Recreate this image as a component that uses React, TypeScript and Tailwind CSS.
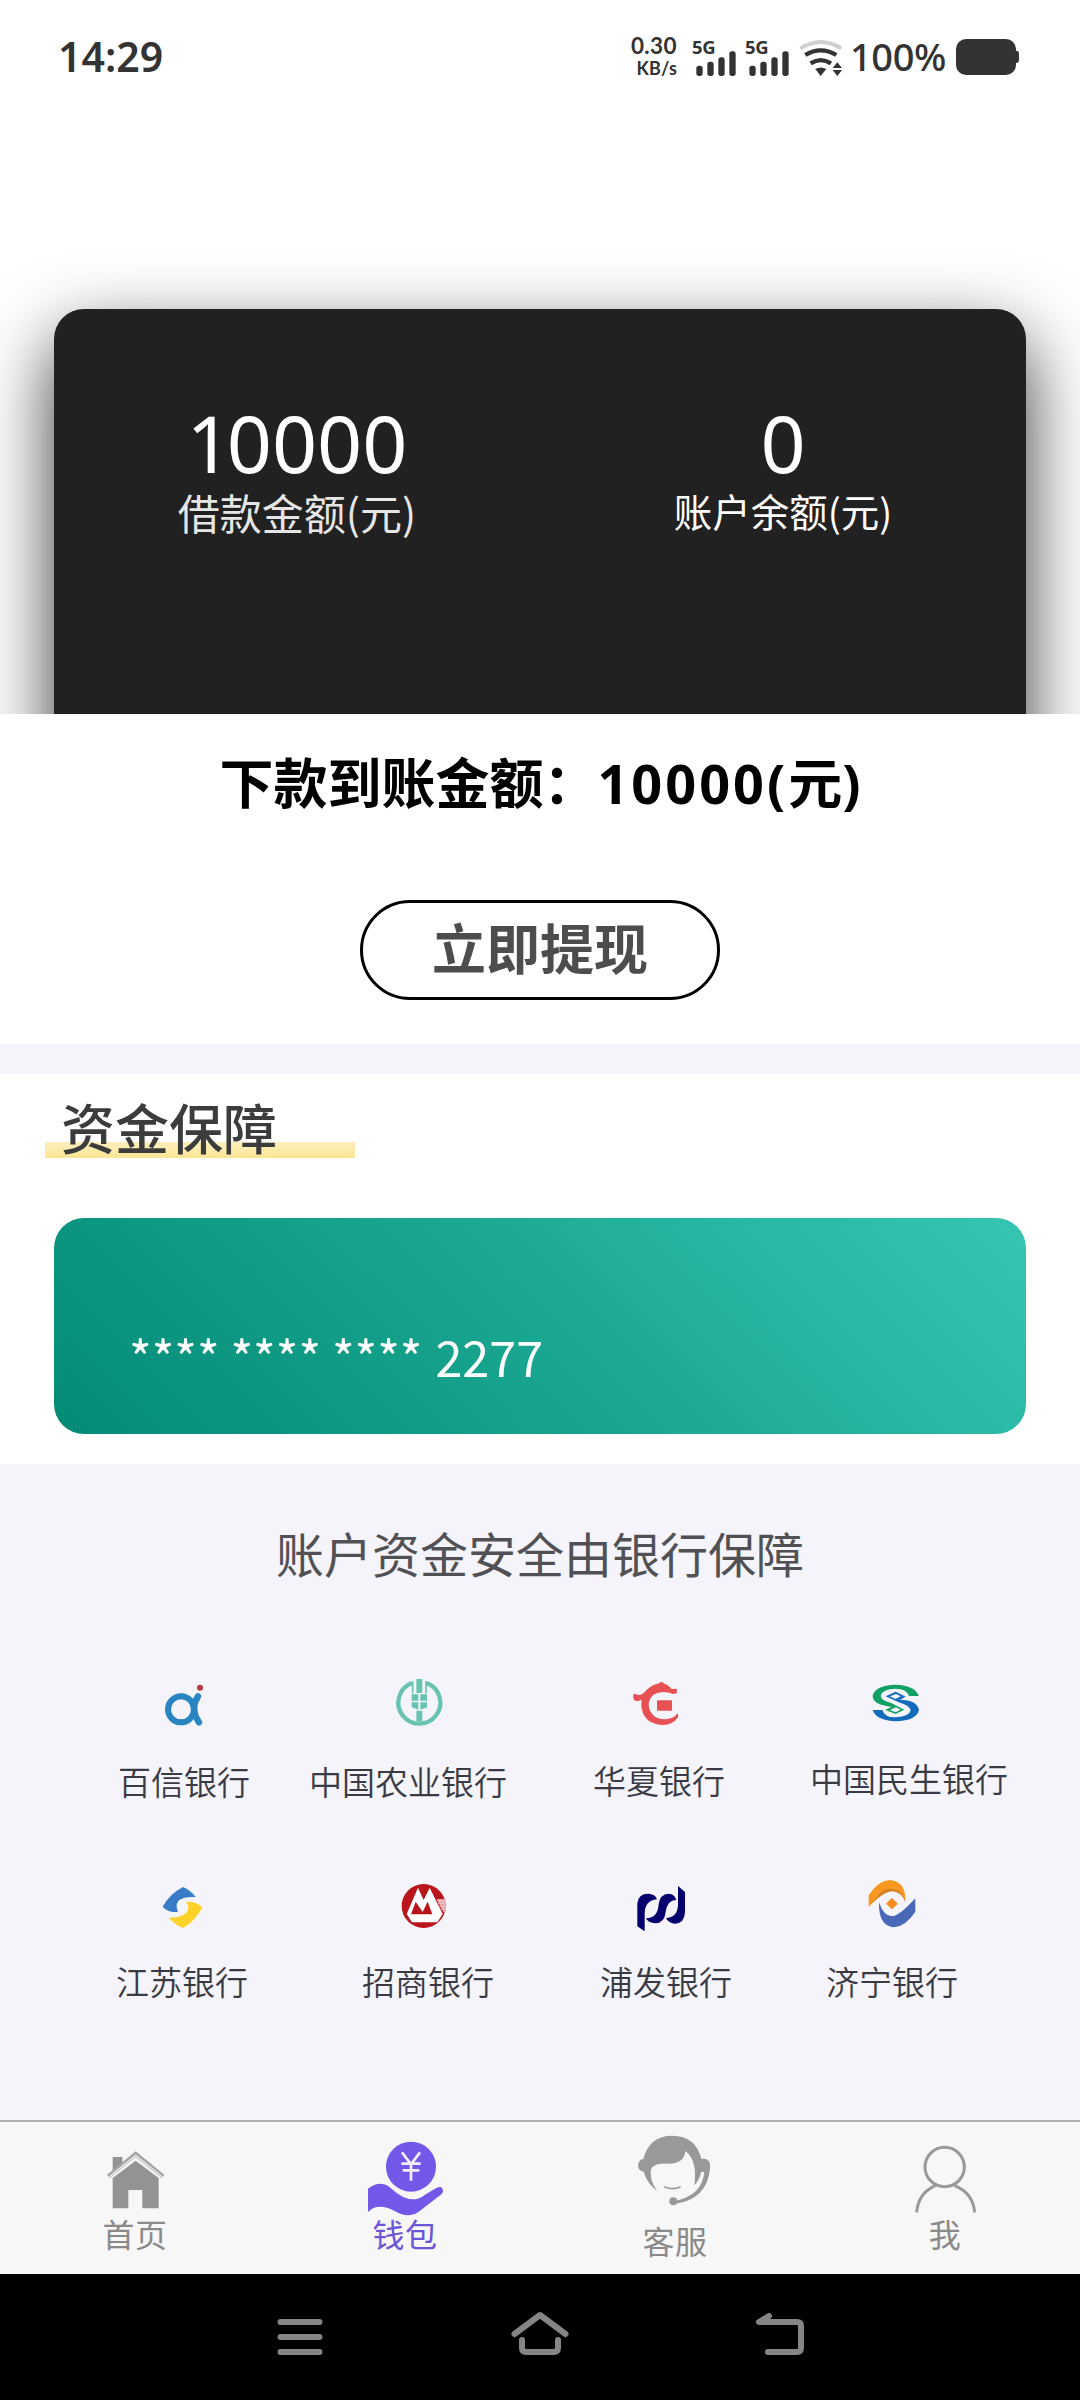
import type { ReactNode } from "react";

const cjk = "font-['Noto_Sans_CJK_SC',sans-serif]";
const latin = "font-['Noto_Sans','Noto_Sans_CJK_SC',sans-serif]";

function Signal() {
  return (
    <div className="relative h-[50px] w-[43px]">
      <span className="absolute -left-[2px] -top-px text-[18.5px] font-bold leading-[24px] tracking-[-0.3px]">5G</span>
      <svg className="absolute left-0 top-0" width="43" height="50" viewBox="278 48 129 150" fill="#333">
        <rect x="285" y="137" width="19" height="31" rx="8" />
        <rect x="318" y="125" width="19" height="43" rx="8" />
        <rect x="351" y="112" width="19" height="56" rx="8" />
        <rect x="384" y="94" width="19" height="74" rx="8" />
      </svg>
    </div>
  );
}

function StatusBar() {
  return (
    <header className={`flex h-[116px] items-start justify-between pl-[58px] pr-[60px] text-[#333] ${latin}`}>
      <span className="mt-[27px] text-[41px] font-semibold leading-[58px]">14:29</span>
      <div className="flex items-start">
        <div className="mr-[2px] mt-[33px] flex w-[48px] flex-col items-end font-['Lato',sans-serif] font-bold">
          <span className="text-[22.5px] leading-[25px] tracking-[0.4px]">0.30</span>
          <span className="text-[18px] leading-[20px] tracking-[0.2px]">KB/s</span>
        </div>
        <div className="ml-[15px] mt-[36px] flex gap-[10px]">
          <Signal />
          <Signal />
        </div>
        <svg className="ml-[7px] mt-[36px]" width="48" height="44" viewBox="590 48 144 132" fill="none">
          <path d="M600 85Q662 47 723 85" stroke="#d0d0d0" strokeWidth="12" />
          <path d="M615 105Q661 77 708 105M631 130Q661 111 692 130" stroke="#333" strokeWidth="13" />
          <path d="M645 147Q661 138 678 147L661 168Z" fill="#333" />
          <path d="M711 127l14 17h-28zM711 168l14-18h-28z" fill="#333" />
        </svg>
        <span className="ml-[5px] mt-[29px] w-[97px] text-[38px] font-medium leading-[54px] tracking-[-0.4px]">100%</span>
        <svg className="ml-[9px] mt-[39px]" width="64" height="37" viewBox="1071 57 192 111" fill="#333">
          <rect x="1071" y="57" width="180" height="108" rx="30" />
          <rect x="1238" y="92" width="22" height="37" rx="9" />
        </svg>
      </div>
    </header>
  );
}

type Bank = { name: string; cell: string; label?: string; viewBox: string; width: number; logo: ReactNode };

const firstRow: Bank[] = [
  {
    name: "百信银行", cell: "w-[132px]", viewBox: "114 0 396 270", width: 132,
    logo: (
      <>
        <circle cx="303" cy="178" r="39" fill="none" stroke="#2885c2" strokeWidth="18" />
        <path d="M354 139Q329 178 357 217" fill="none" stroke="#2885c2" strokeWidth="19" strokeLinecap="round" />
        <circle cx="360" cy="113" r="9" fill="#b53740" />
      </>
    ),
  },
  {
    name: "中国农业银行", cell: "ml-[59px] w-[198px]", viewBox: "687 0 594 270", width: 198,
    logo: (
      <>
        <g fill="none" stroke="#69c3b2">
          <path d="M996 99A63 63 0 1 0 1040 99" strokeWidth="13" />
          <path d="M998 94V130M1038 94V130" strokeWidth="5" />
        </g>
        <g fill="#69c3b2">
          <path d="M1009 87h18v42h-18zM995 133h20v19h-20zM1021 133h20v19h-20zM995 157h20v22l-20-7zM1021 157h20v15l-20 7zM1009 182h18v32h-18z" />
        </g>
      </>
    ),
  },
  {
    name: "华夏银行", cell: "ml-[86px] w-[132px]", label: "mt-[16px]", viewBox: "99 0 396 270", width: 132,
    logo: (
      <g fill="#e85154">
        <path d="M219 137Q222 128 231 134Q244 138 257 123Q275 103 294 101L305 95L313 101Q327 105 334 117L350 116L351 129L340 132Q305 119 280 134Q260 153 269 180Q282 209 315 208Q341 207 353 190Q356 193 354 202Q338 225 309 225Q264 224 249 190Q242 170 244 149Q231 156 222 150Z" />
        <rect x="291" y="151" width="45" height="31" rx="3" />
      </g>
    ),
  },
  {
    name: "中国民生银行", cell: "ml-[85px] w-[198px]", label: "mt-[14px]", viewBox: "750 0 594 270", width: 198,
    logo: (
      <>
        <path d="M1076 138H1047Q1040 116 1006 116Q967 117 962 137Q963 152 992 158L1033 179L1007 192L976 180L995 170Q939 165 938 138Q944 106 1006 104Q1067 106 1076 138ZM990 180L1007 187L1022 179L1008 172Z" fill="#12a164" fillRule="evenodd" />
        <path d="M938 180H967Q974 203 1008 202Q1048 200 1052 181Q1049 166 1016 157L977 139L1007 125L1037 140L1020 149Q1070 149 1077 180Q1069 212 1008 214Q948 211 938 180ZM990 139L1006 147L1022 139L1008 132Z" fill="#126cbb" fillRule="evenodd" />
      </>
    ),
  },
];

const secondRow: Bank[] = [
  {
    name: "江苏银行", cell: "w-[132px]", viewBox: "108 0 396 270", width: 132,
    logo: (
      <>
        <path d="M309 111Q332 121 347 141Q312 139 297 151Q284 163 294 185Q267 190 248 170Q270 131 309 111Z" fill="#387cc8" />
        <path d="M367 173Q344 214 309 234Q284 224 266 203Q305 203 319 188Q332 171 318 156Q348 153 367 173Z" fill="#fdd229" />
      </>
    ),
  },
  {
    name: "招商银行", cell: "ml-[114px] w-[132px]", viewBox: "846 0 396 270", width: 132,
    logo: (
      <>
        <circle cx="1031" cy="168" r="66" fill="#b9151b" />
        <path d="M1014 113L980 192L996 217H1072L1088 192L1049 113L1031 150Z" fill="#fff" />
        <path d="M1007 155L993 193H1057L1043 155L1028 186Z" fill="#b9151b" />
        <path d="M1070 147H1097V187H1090Z" fill="#e9a4aa" />
        <path d="M1071 153h26M1074 161h23M1077 169h20M1081 177h15" stroke="#f8e2e6" strokeWidth="2" />
      </>
    ),
  },
  {
    name: "浦发银行", cell: "ml-[106px] w-[132px]", viewBox: "120 0 396 270", width: 132,
    logo: (
      <path d="M254 244L232 229V160Q235 131 264 131Q286 132 291 148Q255 151 254 190ZM296 163Q300 132 326 131Q344 132 349 150Q323 149 317 185Q314 219 286 220Q264 219 258 205Q294 204 296 163ZM354 108L375 126V187Q373 220 346 221Q325 220 318 204Q352 203 354 166Z" fill="#05006e" />
    ),
  },
  {
    name: "济宁银行", cell: "ml-[94px] w-[132px]", viewBox: "798 0 396 270", width: 132,
    logo: (
      <>
        <path d="M926 170V135Q957 90 990 90Q1039 94 1036 157Q1030 128 1000 123Q974 119 926 170Z" fill="#f89820" />
        <path d="M926 170L961 129Q982 111 1006 119Q1032 127 1036 157Q1026 128 1000 124Q974 121 926 170Z" fill="#d87d22" />
        <path d="M1066 145V185Q1035 231 1001 232Q955 228 957 157Q970 198 996 199Q1018 198 1066 145Z" fill="#4968b8" />
        <path d="M995 144L1014 161L996 178L978 161Z" fill="#f58d20" />
      </>
    ),
  },
];

function BankRow({ banks, className }: { banks: Bank[]; className: string }) {
  return (
    <div className={`flex items-start ${className}`}>
      {banks.map((b) => (
        <div key={b.name} className={`flex flex-none flex-col ${b.cell}`}>
          <svg width={b.width} height="90" viewBox={b.viewBox}>{b.logo}</svg>
          <span className={`whitespace-nowrap text-[33px] font-[350] leading-[48px] text-[#3a3a44] ${b.label ?? "mt-[17px]"} ${cjk}`}>{b.name}</span>
        </div>
      ))}
    </div>
  );
}

const tabs = [
  {
    label: "首页", viewBox: "-180 63 810 291", text: "-mt-px text-[#8a8a8a]",
    icon: (
      <g fill="#939393">
        <path d="M158 171h29v18l-29 26z" />
        <path d="M227 182L296 234V325H247V270H205V325H158V234Z" />
        <path d="M145 229L227 162L309 229" fill="none" stroke="#a5a5a5" strokeWidth="13" />
        <path d="M148 230L227 166L306 230" fill="none" stroke="#eee" strokeWidth="4" />
      </g>
    ),
  },
  {
    label: "钱包", viewBox: "630 63 810 291", text: "-mt-px text-[#6c55d6]",
    icon: (
      <>
        <circle cx="1053" cy="200" r="75" fill="#7257e8" />
        <path d="M1026 157L1053 193L1080 157M1053 193V242M1024 191H1082M1028 211H1078" fill="none" stroke="#f3edff" strokeWidth="8" />
        <path d="M924 266Q961 238 992 264Q1052 320 1095 284L1130 263Q1149 256 1149 275L1145 282L1083 330Q1049 360 1003 332Q952 306 924 336Z" fill="#7257e8" />
      </>
    ),
  },
  {
    label: "客服", viewBox: "0 63 810 291", text: "mt-[6px] text-[#8a8a8a]",
    icon: (
      <>
        <path d="M310 177Q328 107 397 107Q468 108 484 177Q505 174 510 191V207Q500 299 406 311V303Q486 286 493 216L484 215Q478 241 463 255Q473 181 436 153Q433 190 388 191Q334 188 332 214Q331 247 352 273Q322 252 311 215Q295 214 294 196Q296 178 310 177Z" fill="#999" />
        <circle cx="400" cy="304" r="12" fill="#999" />
        <path d="M373 260Q398 272 422 260" fill="none" stroke="#999" strokeWidth="5" />
      </>
    ),
  },
  {
    label: "我", viewBox: "810 63 810 291", text: "-mt-px text-[#8a8a8a]",
    icon: (
      <g fill="none" stroke="#999" strokeWidth="9">
        <circle cx="1214" cy="201" r="59" />
        <path d="M1130 337Q1135 279 1186 257M1304 337Q1299 279 1244 257" />
      </g>
    ),
  },
];

export default function App() {
  return (
    <div className={`flex h-[2400px] w-[1080px] flex-col overflow-hidden bg-white ${cjk}`}>
      <StatusBar />

      <section className="h-[598px] flex-none overflow-hidden px-[54px] pt-[193px]">
        <div className="flex h-[500px] rounded-[30px] bg-[#212121] pt-[80px] text-white shadow-[0_30px_75px_rgba(0,0,0,0.8)]">
          <div className="flex w-1/2 flex-col items-center">
            <span className={`text-[79px] leading-[108px] ${latin}`}><span className="tracking-[-5px]">1</span>0000</span>
            <span className="-mt-[9px] text-[42px] leading-[48px] text-[#e6e6e6]">借款金额(元)</span>
          </div>
          <div className="flex w-1/2 flex-col items-center">
            <span className={`text-[79px] leading-[108px] ${latin}`}>0</span>
            <span className="-mt-[11px] text-[38.5px] leading-[48px]">账户余额(元)</span>
          </div>
        </div>
      </section>

      <section className="flex h-[330px] flex-none flex-col items-center">
        <h1 className="mt-[27px] whitespace-nowrap text-[54px] font-bold leading-[80px] text-black">
          下款到账金额：<span className={`tracking-[3px] ${latin}`}>10000(</span>元<span className={latin}>)</span>
        </h1>
        <button className="mt-[77px] h-[100px] w-[360px] rounded-full border-[3px] border-black text-[54px] font-bold leading-[88px] text-[#4d4d4d]">
          <span className="relative -top-[3px]">立即提现</span>
        </button>
      </section>

      <div className="h-[30px] flex-none bg-[#f4f4fa]" />

      <section className="h-[390px] flex-none px-[54px]">
        <div className="ml-[-9px] flex h-[144px] w-[310px] items-start">
          <h2 className="mt-[13px] h-[72px] w-full bg-[linear-gradient(#fdefbd,#fbe695)] bg-[length:100%_16px] bg-[position:0_55px] bg-no-repeat pl-[16px] text-[54px] font-medium leading-[80px] text-[#3c3c3c]">
            资金保障
          </h2>
        </div>
        <div className="flex h-[216px] items-start rounded-[30px] bg-[linear-gradient(45deg,#038b76,#15a18b_40%,#26b5a0_72%,#35c5b1)] pl-[75px] pt-[103px] text-white">
          <span className="whitespace-nowrap text-[48.5px] leading-[70px]">**** **** **** <span className="ml-[2px]">2277</span></span>
        </div>
      </section>

      <section className="h-[656px] flex-none bg-[#f4f4fa] pt-[52px]">
        <h3 className="text-center text-[48px] leading-[72px] text-[#515155]">账户资金安全由银行保障</h3>
        <BankRow banks={firstRow} className="mt-[62px] h-[200px] pl-[118px]" />
        <BankRow banks={secondRow} className="pl-[116px]" />
      </section>

      <nav className="flex h-[154px] flex-none border-t-2 border-[#b0b0b5] bg-[#f7f7f7]">
        {tabs.map((t) => (
          <div key={t.label} className="flex w-1/4 flex-col items-center">
            <svg className="-mt-px flex-none" width="270" height="97" viewBox={t.viewBox}>{t.icon}</svg>
            <span className={`text-[32px] leading-[32px] tracking-[0.5px] ${t.text}`}>{t.label}</span>
          </div>
        ))}
      </nav>

      <footer className="flex h-[126px] flex-none justify-center bg-black">
        <svg width="240" height="126" viewBox="180 2274 240 126" fill="none" stroke="#858585" strokeWidth="6" strokeLinecap="round" strokeLinejoin="round">
          <path d="M280.500 2322H319.500M280.500 2337H319.500M280.500 2352H319.500" />
        </svg>
        <svg width="240" height="126" viewBox="420 2274 240 126" fill="none" stroke="#858585" strokeWidth="6" strokeLinecap="round" strokeLinejoin="round">
          <path d="M514.500 2334L540 2315L565.500 2334M522 2340V2348Q522 2352 526 2352H554Q558 2352 558 2348V2340" />
        </svg>
        <svg width="240" height="126" viewBox="660 2274 240 126" fill="none" stroke="#858585" strokeWidth="6" strokeLinecap="round" strokeLinejoin="round">
          <path d="M769 2316L759 2322H797Q801 2322 801 2326V2348Q801 2352 797 2352H768" />
        </svg>
      </footer>
    </div>
  );
}
